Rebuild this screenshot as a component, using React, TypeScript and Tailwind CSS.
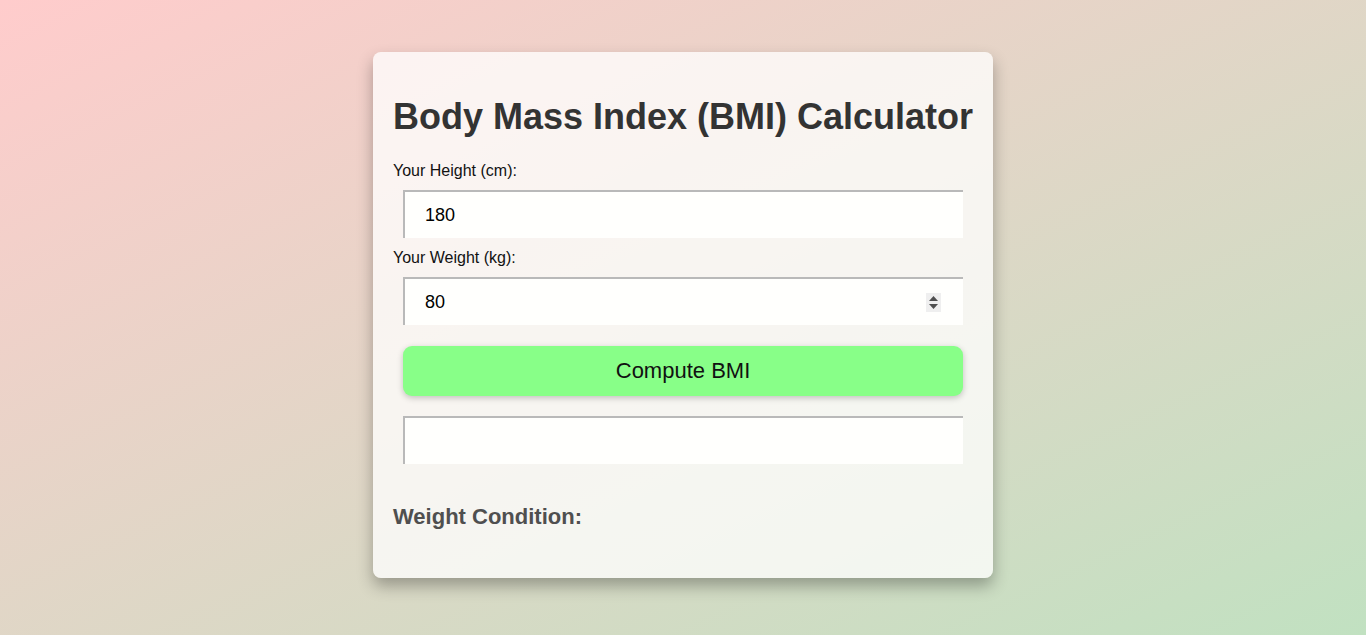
import React from "react";

function Field({ value, spinner }: { value: string; spinner?: boolean }) {
  return (
    <div className="mx-[10px] flex h-[48px] w-[560px] items-center border-t-2 border-l-2 border-r-0 border-b-0 border-solid border-[#b9b9b9] bg-[#fffffd] pl-[20px] pr-[20px] text-[18px] text-black">
      <span className="flex-1 leading-[20px]">{value}</span>
      {spinner ? (
        <div className="mr-[2px] flex h-[19px] w-[15px] flex-col items-center justify-center gap-[3px] bg-[#efefef]">
          <svg width="9" height="5" viewBox="0 0 9 5">
            <path d="M4.5 0 L9 5 L0 5 Z" fill="#4f4f4f" />
          </svg>
          <svg width="9" height="5" viewBox="0 0 9 5">
            <path d="M0 0 L9 0 L4.5 5 Z" fill="#4f4f4f" />
          </svg>
        </div>
      ) : null}
    </div>
  );
}

export default function App() {
  return (
    <div
      className="min-h-screen w-full bg-[linear-gradient(to_bottom_right,#ffcccc,#c1e1c1)] pt-[52px]"
      style={{ fontFamily: '"Liberation Sans", Arial, sans-serif' }}
    >
      <div className="mx-auto w-[620px] rounded-[8px] bg-white/75 px-[20px] pt-[44px] pb-[49px] shadow-[0_8px_16px_rgba(0,0,0,0.3)]">
        <h1 className="whitespace-nowrap text-[36px] font-bold leading-[42px] text-[#333333]">
          Body Mass Index (BMI) Calculator
        </h1>
        <div className="mt-[24px] text-[16px] leading-[18px] text-[#111111]">Your Height (cm):</div>
        <div className="mt-[10px]">
          <Field value="180" />
        </div>
        <div className="mt-[11px] text-[16px] leading-[18px] text-[#111111]">Your Weight (kg):</div>
        <div className="mt-[10px]">
          <Field value="80" spinner />
        </div>
        <div className="mt-[21px] mx-[10px]">
          <button className="flex h-[50px] w-[560px] items-center justify-center rounded-[9px] bg-[#88ff88] text-[22px] leading-[26px] text-[#111111] shadow-[0_2px_6px_rgba(0,0,0,0.22)]">
            Compute BMI
          </button>
        </div>
        <div className="mt-[20px]">
          <Field value="" />
        </div>
        <div className="mt-[40px] text-[22px] font-bold leading-[25px] text-[#4f4f4f]">
          Weight Condition:
        </div>
      </div>
    </div>
  );
}
